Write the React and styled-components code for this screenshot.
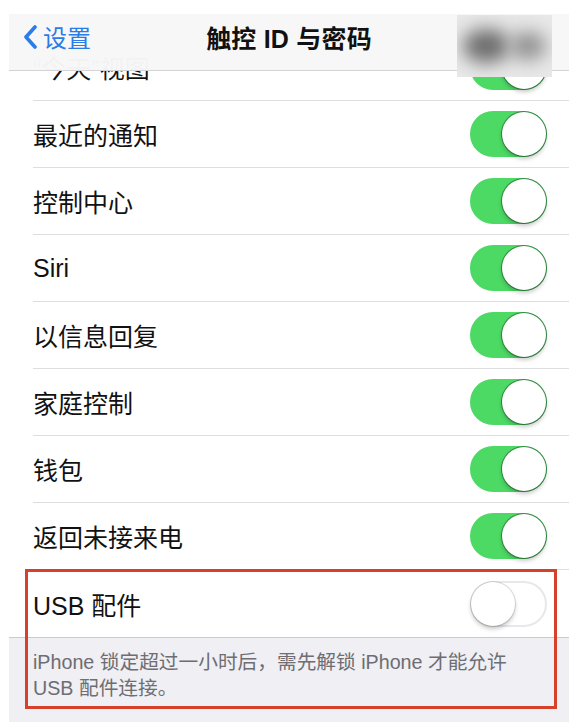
import React from 'react';
import styled, { createGlobalStyle } from 'styled-components';

const GlobalStyle = createGlobalStyle`
  html, body {
    margin: 0;
    padding: 0;
    background: #ffffff;
  }
  body {
    font-family: "Liberation Sans", "Noto Sans CJK SC", sans-serif;
    color: #111111;
  }
`;

const Screen = styled.div`
  position: relative;
  width: 569px;
  height: 722px;
  overflow: hidden;
  background: #ffffff;
`;

/* translucent bar floating over the scrolled list */
const NavBar = styled.div`
  position: absolute;
  top: 14px;
  left: 9px;
  right: 0;
  height: 57px;
  box-sizing: border-box;
  padding-bottom: 11px;
  z-index: 2;
  display: grid;
  grid-template-columns: 1fr auto 1fr;
  align-items: center;
  background: rgba(247, 247, 248, 0.98);
  border-bottom: 1px solid #d4d4d6;
`;

const BackButton = styled.div`
  display: flex;
  align-items: center;
  gap: 6px;
  padding-left: 14px;
  color: #2a7ce6;
  font-size: 24px;
  svg {
    display: block;
  }
`;

const Title = styled.div`
  font-size: 25px;
  font-weight: 700;
  color: #111111;
  letter-spacing: 0.2px;
`;

/* blurred-out area in the top right corner */
const BlurPatch = styled.div`
  position: absolute;
  top: 15px;
  left: 457px;
  width: 95px;
  height: 62px;
  z-index: 3;
  overflow: hidden;
  display: flex;
  align-items: center;
  padding: 0 6px;
  box-sizing: border-box;
  background: #e7e8e7;
`;

const Smudge = styled.div`
  flex: ${p => p.$grow};
  height: ${p => p.$h}px;
  border-radius: 50%;
  background: ${p => p.$color};
  filter: blur(9px);
`;

const List = styled.div`
  margin-left: 9px;
  padding-top: 34px;
`;

const Row = styled.div`
  padding-left: 24px;
  background: #ffffff;
`;

const RowInner = styled.div`
  box-sizing: border-box;
  height: 67px;
  display: flex;
  align-items: center;
  justify-content: space-between;
  padding-right: 22px;
  border-bottom: ${p => (p.$last ? 'none' : '1px solid #dedee0')};
`;

const Label = styled.span`
  font-size: 25px;
  color: #111111;
`;

const Track = styled.div`
  box-sizing: border-box;
  width: 77px;
  height: 46px;
  border-radius: 23px;
  display: flex;
  align-items: center;
  justify-content: ${p => (p.$on ? 'flex-end' : 'flex-start')};
  background: ${p => (p.$on ? '#4cd964' : '#ffffff')};
  border: 2px solid ${p => (p.$on ? '#4cd964' : '#e8e8ea')};
`;

const Knob = styled.div`
  flex: none;
  width: 44px;
  height: 44px;
  margin: 0 -1px;
  border-radius: 50%;
  background: #ffffff;
  box-shadow: 0 0 0 1px rgba(0, 0, 0, ${p => (p.$on ? 0.35 : 0.12)}),
    0 3px 4px rgba(0, 0, 0, 0.22);
`;

const Footer = styled.div`
  margin-left: 9px;
  padding: 11px 40px 30px 24px;
  background: #efeff4;
  border-top: 1px solid #c9c9ce;
  font-size: 19.7px;
  line-height: 26px;
  color: #6d6d72;
`;

/* red annotation frame drawn over the last row */
const Highlight = styled.div`
  position: absolute;
  left: 25px;
  top: 569px;
  width: 532px;
  height: 140px;
  box-sizing: border-box;
  border: 3px solid #d6412c;
  z-index: 4;
  pointer-events: none;
`;

function Toggle({ on }) {
  return (
    <Track $on={on}>
      <Knob $on={on} />
    </Track>
  );
}

const rows = [
  { label: '“今天”视图', on: true },
  { label: '最近的通知', on: true },
  { label: '控制中心', on: true },
  { label: 'Siri', on: true },
  { label: '以信息回复', on: true },
  { label: '家庭控制', on: true },
  { label: '钱包', on: true },
  { label: '返回未接来电', on: true },
  { label: 'USB 配件', on: false },
];

export default function App() {
  return (
    <>
      <GlobalStyle />
      <Screen>
        <NavBar>
          <BackButton>
            <svg width="14" height="24" viewBox="0 0 14 24">
              <polyline
                points="12,2 3,12 12,22"
                fill="none"
                stroke="#2a7ce6"
                strokeWidth="3.6"
                strokeLinecap="round"
                strokeLinejoin="round"
              />
            </svg>
            <span>设置</span>
          </BackButton>
          <Title>触控 ID 与密码</Title>
          <div />
        </NavBar>

        <BlurPatch>
          <Smudge $grow={1.3} $h={34} $color="#6c6d6c" />
          <Smudge $grow={1} $h={28} $color="#8f908f" />
        </BlurPatch>

        <List>
          {rows.map((r, i) => (
            <Row key={r.label}>
              <RowInner $last={i === rows.length - 1}>
                <Label>{r.label}</Label>
                <Toggle on={r.on} />
              </RowInner>
            </Row>
          ))}
        </List>

        <Footer>iPhone 锁定超过一小时后，需先解锁 iPhone 才能允许 USB 配件连接。</Footer>

        <Highlight />
      </Screen>
    </>
  );
}
